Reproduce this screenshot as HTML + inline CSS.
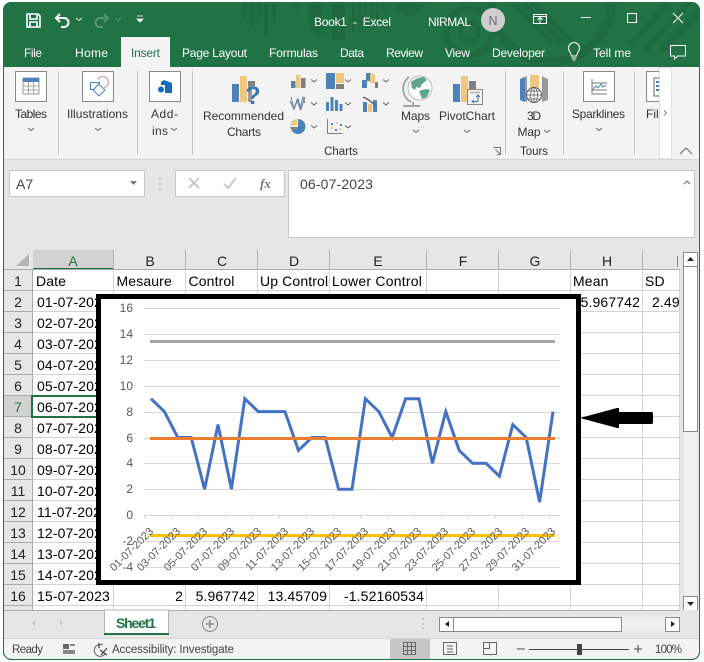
<!DOCTYPE html>
<html><head><meta charset="utf-8"><style>
html,body{margin:0;padding:0;background:#fff;width:704px;height:662px;overflow:hidden}
svg{display:block}
text{font-family:"Liberation Sans",sans-serif;white-space:pre}
.t{font-size:12px;fill:#fff}
.r{font-size:12px;fill:#333}
.c{font-size:14px;fill:#000;letter-spacing:.13px}
.h{font-size:14px;fill:#222;text-anchor:middle}
.a{font-size:12px;fill:#595959;text-anchor:end}
.d{font-size:11px;fill:#595959;text-anchor:end}
.m{text-anchor:middle}
</style></head><body>
<svg width="704" height="662" viewBox="0 0 704 662" xmlns="http://www.w3.org/2000/svg">
<defs><clipPath id="tb"><rect x="3" y="2" width="697" height="65"/></clipPath></defs>
<rect width="704" height="662" fill="#fff"/>
<!-- window -->
<rect x="3" y="2" width="697" height="658" rx="8" fill="#217346"/>
<rect x="4" y="60" width="695" height="599" rx="6" fill="#e6e6e6"/>
<rect x="3" y="37" width="697" height="30" fill="#217346"/>
<!-- title decoration -->
<g clip-path="url(#tb)" fill="#1f6a40">
<rect x="243" y="2" width="4" height="16"/><rect x="250" y="2" width="4" height="24"/><rect x="257" y="2" width="4" height="17"/><rect x="264" y="2" width="4" height="33"/><rect x="272" y="2" width="4" height="21"/>
<path d="M291 2h7v13zM309 2h13v34l-13-6zM332 2h13v38h-13z"/>
<rect x="352" y="2" width="3" height="30"/><rect x="358" y="2" width="3" height="30"/><rect x="364" y="2" width="3" height="26"/><rect x="370" y="2" width="3" height="22"/><rect x="376" y="2" width="3" height="18"/><rect x="382" y="2" width="3" height="12"/>
<circle cx="410" cy="2" r="14"/>
<circle cx="469" cy="32" r="23" fill="none" stroke="#1f6a40" stroke-width="7"/><circle cx="469" cy="32" r="9" fill="none" stroke="#1f6a40" stroke-width="5"/>
<circle cx="551" cy="2" r="60" fill="none" stroke="#1f6a40" stroke-width="9"/>
<path d="M512 2l40 40M522 2l40 40M532 2l40 40" stroke="#1f6a40" stroke-width="5" fill="none"/>
<path d="M630 45l40-43M645 50l45-48M660 52l40-40" stroke="#1f6a40" stroke-width="6" fill="none"/>
</g>
<!-- QAT -->
<path d="M27 14h11l2 2v11H27zM30 14v5h7v-5M30 27v-5h7v5" fill="none" stroke="#fff" stroke-width="1.6"/>
<path d="M60 14l-4 4 4 4M56 18h8a4.500 4.500 0 0 1 0 9h-3" fill="none" stroke="#fff" stroke-width="2"/>
<path d="M76 18l3 2.500 3-2.500" fill="none" stroke="#e8f0ea" stroke-width="1"/>
<path d="M115 18l3 2.500 3-2.500" fill="none" stroke="#57946f" stroke-width="1"/>
<path d="M104 14l4 4-4 4M108 18h-8a4.500 4.500 0 0 0 0 9h3" fill="none" stroke="#57946f" stroke-width="2"/>
<path d="M137 16h6M137 19h6l-3 3z" fill="#fff" stroke="#fff" stroke-width=".8"/>
<text class="t" x="314" y="26" textLength="77">Book1  -  Excel</text>
<text class="t" x="428" y="26" textLength="43">NIRMAL</text>
<circle cx="493" cy="20" r="12" fill="#d0cdcd"/>
<text x="493" y="25" class="m" style="font-size:12.500px;fill:#6d6a85">N</text>
<path d="M533.500 14.500h13v9h-13zM533.500 16.500h13M540 23v-5M537.500 20l2.500-2.500 2.500 2.500" fill="none" stroke="#fff"/>
<path d="M581 17.500h10" stroke="#fff"/>
<rect x="627.500" y="13.500" width="9" height="9" fill="none" stroke="#fff"/>
<path d="M673 13l10 10M683 13l-10 10" stroke="#fff"/>
<!-- tabs -->
<rect x="121" y="37" width="49" height="31" fill="#f3f3f3"/>
<text class="t" x="24" y="57" textLength="18">File</text>
<text class="t" x="75" y="57" textLength="33">Home</text>
<text class="t" x="131" y="57" style="fill:#217346" textLength="29">Insert</text>
<text class="t" x="182" y="57" textLength="65">Page Layout</text>
<text class="t" x="269" y="57" textLength="49">Formulas</text>
<text class="t" x="340" y="57" textLength="24">Data</text>
<text class="t" x="386" y="57" textLength="37">Review</text>
<text class="t" x="445" y="57" textLength="25">View</text>
<text class="t" x="492" y="57" textLength="53">Developer</text>
<path d="M571.500 56c0-3-3-4-3-8a5.500 5.500 0 0 1 11 0c0 4-3 5-3 8zM571.500 58h5M572.500 60h3" fill="none" stroke="#fff"/>
<text class="t" x="593" y="57" textLength="38">Tell me</text>
<path d="M670.500 45.500h15v10.500h-8l-3 3v-3h-4z" fill="none" stroke="#fff"/>
<!-- ribbon -->
<rect x="4" y="67" width="695" height="92" fill="#f3f3f3"/>
<rect x="4" y="159" width="695" height="1" fill="#d5d5d5"/>
<path d="M58.500 71v84M137.500 71v84M192.500 71v84M505.500 71v84M563.500 71v84M634.500 71v84" stroke="#c6c6c6"/>
<g fill="#fff" stroke="#8a8a8a"><rect x="15.500" y="71.500" width="31" height="30"/><rect x="82.500" y="71.500" width="31" height="30"/><rect x="149.500" y="71.500" width="31" height="30"/><rect x="583.500" y="71.500" width="31" height="30"/><rect x="646.500" y="71.500" width="20" height="30"/></g>
<!-- tables icon -->
<rect x="23" y="78" width="16" height="16" fill="#fff" stroke="#9a9a9a"/><rect x="23" y="78" width="16" height="4" fill="#4d82b8"/>
<path d="M23 86h16M23 90h16M28.500 82v12M33.500 82v12" stroke="#a8a8a8"/>
<!-- illustrations -->
<path d="M90.500 82.500h9v7h-9z" fill="none" stroke="#4d82b8"/><path d="M98 79.500a5.500 5.500 0 1 1 6 8" fill="none" stroke="#c88f83"/><path d="M99 84l6 6-6 6-6-6z" fill="#fff" stroke="#4d82b8"/>
<!-- addins -->
<path d="M164 80l8 3v9l-6 0v-7h-5v-3z" fill="#0f6cbd"/><path d="M165 85h7v8h-7z" fill="#0f6cbd"/><circle cx="161" cy="89.500" r="3" fill="#0f6cbd"/>
<!-- sparkline -->
<path d="M592 79v15h15M592 83h15M592 90h15" fill="none" stroke="#777"/><path d="M593 89l3-3 2 2 3-4 2 3 3-2" fill="none" stroke="#4d82b8"/>
<rect x="654" y="78" width="8" height="18" fill="#fff" stroke="#666"/><path d="M656 82h6M656 86h6M656 90h6" stroke="#4d82b8" stroke-width="2"/>
<!-- rec charts -->
<rect x="232" y="84" width="7" height="18" fill="#4d82b8"/><rect x="240" y="76" width="7" height="26" fill="#edc87e"/><rect x="248" y="81" width="7" height="5" fill="#7f7f7f"/><rect x="248" y="86" width="4" height="16" fill="#9a9a9a"/>
<text x="253" y="104" class="m" style="font-size:25px;font-weight:bold;fill:#3a78ad">?</text>
<!-- col 1 -->
<rect x="291" y="81" width="4.500" height="7" fill="#4d82b8"/><rect x="296" y="75" width="4.500" height="13" fill="#edc87e"/><rect x="301" y="78" width="4.500" height="10" fill="#7f7f7f"/>
<path d="M291 97l3 12 3-9 3 9 3-12 2 6" fill="none" stroke="#7f7f7f" stroke-width="1"/><path d="M290 101l4 8 4-10 3 10 4-12" fill="none" stroke="#4d82b8" stroke-width="1"/>
<path d="M298 119a7.500 7.500 0 1 1-6 12l6-4.500z" fill="#4d82b8"/><path d="M297 119a7.500 7.500 0 0 0-7 6.500h7z" fill="#edc87e"/><path d="M290 127h7l-5 4z" fill="#7f7f7f"/>
<!-- col 2 -->
<rect x="326" y="73" width="9" height="16" fill="#4d82b8"/><rect x="336" y="73" width="8" height="10" fill="#edc87e"/><rect x="336" y="84" width="8" height="5" fill="#7f7f7f"/>
<path d="M326 102h3v9h-3zM330.500 97h3v14h-3zM335 100h3v11h-3zM339.500 104h3v7h-3z" fill="#4d82b8"/>
<path d="M327.500 119v14.500h15" fill="none" stroke="#7f7f7f"/><path d="M331 127h2v2h-2zM336 122h2v2h-2zM339 128h2v2h-2z" fill="#edc87e"/><path d="M331 123h2v2h-2zM335 129h2v2h-2zM340 124h2v2h-2z" fill="#4d82b8"/>
<!-- col 3 -->
<rect x="362" y="80" width="5" height="8" fill="#4d82b8"/><rect x="366" y="73" width="5" height="8" fill="#4d82b8"/><rect x="370" y="74" width="5" height="9" fill="#edc87e"/><rect x="375" y="82" width="3" height="6" fill="#7f7f7f"/>
<rect x="363" y="102" width="4" height="10" fill="#4d82b8"/><rect x="368" y="104" width="4" height="8" fill="#edc87e"/><rect x="373" y="100" width="4" height="12" fill="#4d82b8"/><path d="M363 97l6 3 6 5" fill="none" stroke="#666" stroke-width="1.500"/>
<path d="M311 79.500l3 2.500 3-2.500M311 102.500l3 2.500 3-2.500M311 125.500l3 2.500 3-2.500M345 79.500l3 2.500 3-2.500M345 102.500l3 2.500 3-2.500M345 125.500l3 2.500 3-2.500M383 79.500l3 2.500 3-2.500M383 102.500l3 2.500 3-2.500M28 128l3 2.500 3-2.500M95 128l3 2.500 3-2.500M171 128l3 2.500 3-2.500M413 130l3 2.500 3-2.500M464 130l3 2.500 3-2.500M544 130l3 2.500 3-2.500M596 128l3 2.500 3-2.500" fill="none" stroke="#666"/>
<!-- globe -->
<path d="M409 77a15 15 0 0 0 2 25M403 106h17M413 102v4" fill="none" stroke="#a5a5a5" stroke-width="2"/>
<circle cx="420" cy="88" r="12" fill="#fff" stroke="#bbb"/><path d="M411 82c4-3 8-5 13-5l3 3-5 4-2 4-4-1-1 3-3-2zM419 91l7-2 4 1-3 7-5 2z" fill="#5fa58d"/>
<!-- pivot -->
<rect x="453" y="84" width="7" height="18" fill="#4d82b8"/><rect x="461" y="76" width="7" height="26" fill="#edc87e"/><rect x="469" y="81" width="7" height="8" fill="#7f7f7f"/>
<rect x="467.500" y="89.500" width="15" height="15" fill="#f3f3f3" stroke="#888"/><path d="M470 92.500h10" stroke="#c2c2c2" stroke-width="2"/><path d="M473 101.500h5v-6M476 97l2-2 2 2M474 100l-2 1.500 2 1.500" fill="none" stroke="#3a78ad"/>
<!-- 3d map -->
<path d="M520 79l7-3v26l-7-2zM542 76l6 3v21l-6 2z" fill="#9a9a9a"/><path d="M520 79l5-2v25l-5-2z" fill="#4d82b8"/><rect x="530" y="75" width="9" height="16" fill="#edc87e"/>
<circle cx="534" cy="95" r="7.500" fill="#fff" stroke="#555"/><path d="M526.500 95h15M534 87.500v15M528 91h12M528 99h12" stroke="#555" stroke-width=".7"/><ellipse cx="534" cy="95" rx="3.500" ry="7.500" fill="none" stroke="#555" stroke-width=".7"/>
<path d="M493.500 147.500h7v7M495.500 149.500l5 5M497 154.500h3.500v-3.500" fill="none" stroke="#777"/>
<!-- ribbon labels -->
<g class="r">
<text class="r m" x="31" y="118" textLength="32">Tables</text>
<text class="r m" x="97.500" y="118" textLength="61">Illustrations</text>
<text class="r m" x="164.500" y="118" textLength="27">Add-</text>
<text class="r m" x="160" y="135" textLength="16">ins</text>
<text class="r m" x="243.500" y="120" textLength="81">Recommended</text>
<text class="r m" x="244" y="136" textLength="34">Charts</text>
<text class="r m" x="415.500" y="120" textLength="29">Maps</text>
<text class="r m" x="467" y="120" textLength="56">PivotChart</text>
<text class="r m" x="534" y="120" textLength="14">3D</text>
<text class="r m" x="529" y="136" textLength="23">Map</text>
<text class="r m" x="598.500" y="118" textLength="53">Sparklines</text>
<text class="r" x="646" y="118">Filt</text>
<text class="r m" x="341" y="155" style="font-size:11.500px">Charts</text>
<text class="r m" x="534" y="155" style="font-size:11.500px">Tours</text>
</g>
<rect x="659.500" y="67.500" width="12" height="91" fill="#fff" stroke="#e2e2e2"/>
<rect x="672" y="68" width="27" height="90" fill="#f3f3f3"/>
<path d="M664 110.500l2.500 2.500-2.500 2.500" fill="none" stroke="#888"/>
<path d="M680 154l6-6 6 6" fill="none" stroke="#666"/>
<!-- formula bar -->
<rect x="9.500" y="170.500" width="135" height="26" fill="#fff" stroke="#c6c6c6"/>
<text x="16" y="189" style="font-size:14px;fill:#444">A7</text>
<path d="M130 181h7l-3.500 4z" fill="#777"/>
<path d="M160 178v2M160 183v2M160 188v2" stroke="#b5b5b5" stroke-width="1.500"/>
<rect x="175.500" y="170.500" width="109" height="26" fill="#fff" stroke="#c6c6c6"/>
<path d="M189 178l10 10M199 178l-10 10" stroke="#c4c4c4" stroke-width="1.800"/>
<path d="M224 184l4 4 8-10" fill="none" stroke="#c4c4c4" stroke-width="1.800"/>
<text x="260" y="188" style="font-family:'Liberation Serif',serif;font-style:italic;font-weight:bold;font-size:13px;fill:#777">fx</text>
<rect x="288.500" y="170.500" width="406" height="67" fill="#fff" stroke="#c6c6c6"/>
<text x="300" y="189" style="font-size:14px;fill:#444;letter-spacing:.15px">06-07-2023</text>
<path d="M684 184l3-3 3 3" fill="none" stroke="#888" stroke-width="1.500"/>
<!-- sheet -->
<rect x="33" y="270" width="647" height="340" fill="#fff"/>
<rect x="4" y="250" width="676" height="20" fill="#e6e6e6"/>
<rect x="33" y="250" width="81" height="19" fill="#d2d2d2"/>
<rect x="33" y="268" width="81" height="2" fill="#217346"/>
<path d="M29 254v12H16z" fill="#b4b4b4"/>
<path d="M113.500 250v19M185.500 250v19M257.500 250v19M329.500 250v19M426.500 250v19M498.500 250v19M570.500 250v19M642.500 250v19" stroke="#b4b4b4"/>
<path d="M4 269.500h676" stroke="#ababab"/>
<path d="M113.500 270v340M185.500 270v340M257.500 270v340M329.500 270v340M426.500 270v340M498.500 270v340M570.500 270v340M642.500 270v340M679.500 270v340" stroke="#d4d4d4"/>
<path d="M33 290.500h647M33 311.500h647M33 332.500h647M33 353.500h647M33 374.500h647M33 395.500h647M33 416.500h647M33 437.500h647M33 458.500h647M33 479.500h647M33 500.500h647M33 521.500h647M33 542.500h647M33 563.500h647M33 584.500h647M33 605.500h647" stroke="#d4d4d4"/>
<rect x="4" y="270" width="28" height="340" fill="#e6e6e6"/>
<rect x="4" y="396" width="28" height="21" fill="#d2d2d2"/>
<path d="M32.500 270v340" stroke="#ababab"/>
<path d="M4 290.500h28M4 311.500h28M4 332.500h28M4 353.500h28M4 374.500h28M4 395.500h28M4 416.500h28M4 437.500h28M4 458.500h28M4 479.500h28M4 500.500h28M4 521.500h28M4 542.500h28M4 563.500h28M4 584.500h28M4 605.500h28" stroke="#ababab"/>
<rect x="31" y="395" width="2" height="23" fill="#217346"/>
<rect x="32" y="395" width="70" height="2" fill="#217346"/><rect x="32" y="416" width="70" height="2" fill="#217346"/>
<text class="h" x="73" y="266" style="fill:#217346">A</text><text class="h" x="150" y="266">B</text><text class="h" x="222" y="266">C</text><text class="h" x="294" y="266">D</text><text class="h" x="378" y="266">E</text><text class="h" x="463" y="266">F</text><text class="h" x="535" y="266">G</text><text class="h" x="607" y="266">H</text>
<rect x="677" y="256" width="1" height="11" fill="#c07a2a"/>
<g>
<text class="h" x="18" y="286">1</text><text class="h" x="18" y="307">2</text><text class="h" x="18" y="328">3</text><text class="h" x="18" y="349">4</text><text class="h" x="18" y="370">5</text><text class="h" x="18" y="391">6</text><text class="h" x="18" y="412" style="fill:#217346">7</text><text class="h" x="18" y="433">8</text><text class="h" x="18" y="454">9</text><text class="h" x="18" y="475">10</text><text class="h" x="18" y="496">11</text><text class="h" x="18" y="517">12</text><text class="h" x="18" y="538">13</text><text class="h" x="18" y="559">14</text><text class="h" x="18" y="580">15</text><text class="h" x="18" y="601">16</text>
</g>
<g>
<text class="c" x="36" y="286">Date</text><text class="c" x="116.500" y="286">Mesaure</text><text class="c" x="188.500" y="286">Control</text><text class="c" x="260" y="286">Up Control</text><text class="c" x="332" y="286" textLength="90">Lower Control</text><text class="c" x="573" y="286">Mean</text><text class="c" x="645" y="286">SD</text>
<text class="c" x="37" y="307">01-07-2023</text><text class="c" x="37" y="328">02-07-2023</text><text class="c" x="37" y="349">03-07-2023</text><text class="c" x="37" y="370">04-07-2023</text><text class="c" x="37" y="391">05-07-2023</text><text class="c" x="37" y="412">06-07-2023</text><text class="c" x="37" y="433">07-07-2023</text><text class="c" x="37" y="454">08-07-2023</text><text class="c" x="37" y="475">09-07-2023</text><text class="c" x="37" y="496">10-07-2023</text><text class="c" x="37" y="517">11-07-2023</text><text class="c" x="37" y="538">12-07-2023</text><text class="c" x="37" y="559">13-07-2023</text><text class="c" x="37" y="580">14-07-2023</text><text class="c" x="37" y="601">15-07-2023</text>
<text class="c" x="640" y="307" text-anchor="end">5.967742</text>
<text class="c" x="652" y="307">2.49</text>
<text class="c" x="183" y="601" text-anchor="end">2</text><text class="c" x="255" y="601" text-anchor="end">5.967742</text><text class="c" x="327" y="601" text-anchor="end">13.45709</text><text class="c" x="424" y="601" text-anchor="end">-1.52160534</text>
</g>
<rect x="680" y="300" width="3" height="12" fill="#e6e6e6"/>
<!-- chart -->
<rect x="98.500" y="296.500" width="480" height="286" fill="#fff" stroke="#000" stroke-width="5"/>
<path d="M144 308.500h416M144 334.500h416M144 360.500h416M144 386.500h416M144 412.500h416M144 438.500h416M144 463.500h416M144 489.500h416M144 515.500h416M144 541.500h416M144 567.500h416" stroke="#d9d9d9"/>
<path d="M144.500 515v4M171.500 515v4M198.500 515v4M225.500 515v4M252.500 515v4M279.500 515v4M306.500 515v4M333.500 515v4M360.500 515v4M387.500 515v4M414.500 515v4M441.500 515v4M468.500 515v4M495.500 515v4M522.500 515v4M549.500 515v4" stroke="#d9d9d9"/>
<g>
<text class="a" x="133" y="312">16</text><text class="a" x="133" y="338">14</text><text class="a" x="133" y="364">12</text><text class="a" x="133" y="390">10</text><text class="a" x="133" y="416">8</text><text class="a" x="133" y="442">6</text><text class="a" x="133" y="467">4</text><text class="a" x="133" y="493">2</text><text class="a" x="133" y="519">0</text><text class="a" x="133" y="545">-2</text><text class="a" x="133" y="571">-4</text>
</g>
<path d="M150 341.500h405" stroke="#a5a5a5" stroke-width="3"/>
<polyline fill="none" stroke="#4472c4" stroke-width="3" stroke-linejoin="miter" points="151,398.700 164.400,411.600 177.800,437.500 191.200,437.500 204.600,489.200 218,424.600 231.400,489.200 244.800,398.700 258.200,411.600 271.600,411.600 285,411.600 298.400,450.400 311.800,437.500 325.200,437.500 338.600,489.200 352,489.200 365.400,398.700 378.800,411.600 392.200,437.500 405.600,398.700 419,398.700 432.400,463.300 445.800,411.600 459.200,450.400 472.600,463.300 486,463.300 499.400,476.200 512.800,424.600 526.200,437.500 539.600,502.100 553,411.600"/>
<path d="M150 438.500h405" stroke="#ed7d31" stroke-width="3"/>
<path d="M150 535.500h405" stroke="#ffc000" stroke-width="3"/>
<g>
<text class="d" transform="translate(154 532) rotate(-45)">01-07-2023</text>
<text class="d" transform="translate(181 532) rotate(-45)">03-07-2023</text>
<text class="d" transform="translate(208 532) rotate(-45)">05-07-2023</text>
<text class="d" transform="translate(235 532) rotate(-45)">07-07-2023</text>
<text class="d" transform="translate(262 532) rotate(-45)">09-07-2023</text>
<text class="d" transform="translate(289 532) rotate(-45)">11-07-2023</text>
<text class="d" transform="translate(315 532) rotate(-45)">13-07-2023</text>
<text class="d" transform="translate(342 532) rotate(-45)">15-07-2023</text>
<text class="d" transform="translate(369 532) rotate(-45)">17-07-2023</text>
<text class="d" transform="translate(396 532) rotate(-45)">19-07-2023</text>
<text class="d" transform="translate(422 532) rotate(-45)">21-07-2023</text>
<text class="d" transform="translate(449 532) rotate(-45)">23-07-2023</text>
<text class="d" transform="translate(476 532) rotate(-45)">25-07-2023</text>
<text class="d" transform="translate(503 532) rotate(-45)">27-07-2023</text>
<text class="d" transform="translate(530 532) rotate(-45)">29-07-2023</text>
<text class="d" transform="translate(556 532) rotate(-45)">31-07-2023</text>
</g>
<!-- arrow -->
<path d="M580 418l37-10h2v4h33l1 1v10l-1 1h-33v4h-2z" fill="#000"/>
<!-- vertical scrollbar -->
<rect x="683" y="250" width="16" height="360" fill="#e6e6e6"/>
<rect x="684" y="266" width="13" height="330" fill="#f0f0f0"/>
<rect x="683.500" y="252.500" width="14" height="14" fill="#fff" stroke="#8a8a8a"/>
<path d="M687 261l3.500-4 3.500 4z" fill="#222"/>
<rect x="683.500" y="266.500" width="14" height="165" fill="#fff" stroke="#8a8a8a"/>
<rect x="683.500" y="596.500" width="14" height="14" fill="#fff" stroke="#8a8a8a"/>
<path d="M687 602l3.500 4 3.500-4z" fill="#222"/>
<!-- sheet tabs -->
<rect x="4" y="610" width="695" height="28" fill="#e6e6e6"/>
<path d="M4 610.500h676" stroke="#ababab"/>
<path d="M35 620v6l-3-3zM60 620v6l3-3z" fill="#c4c4c4"/>
<rect x="104.500" y="610" width="64" height="24" fill="#fff" stroke="#b4b4b4"/>
<rect x="104" y="633" width="65" height="2" fill="#217346"/>
<text x="136" y="628" class="m" style="font-size:14px;font-weight:bold;fill:#217346" textLength="40">Sheet1</text>
<circle cx="210" cy="624" r="7.500" fill="none" stroke="#888"/>
<path d="M206 624h8M210 620v8" stroke="#888" stroke-width="1.500"/>
<path d="M423 618v2M423 623v2M423 627v2" stroke="#b5b5b5" stroke-width="1.500"/>
<rect x="439" y="617" width="241" height="14" fill="#f0f0f0"/>
<rect x="439.500" y="617.500" width="14" height="14" fill="#fff" stroke="#8a8a8a"/>
<path d="M449 621v6l-4-3z" fill="#222"/>
<rect x="453.500" y="617.500" width="168" height="14" fill="#fff" stroke="#8a8a8a"/>
<rect x="665.500" y="617.500" width="14" height="14" fill="#fff" stroke="#8a8a8a"/>
<path d="M671 621v6l4-3z" fill="#222"/>
<!-- status bar -->
<rect x="4" y="638" width="695" height="21" fill="#f3f3f3"/>
<path d="M4 638.500h695" stroke="#d5d5d5"/>
<text x="12" y="653" style="font-size:11.500px;fill:#444" textLength="31">Ready</text>
<path d="M63 644h6v5h-6z" fill="#666"/><path d="M70 644h5v2h-5zM63 650h12v4H63z" fill="#888"/>
<path d="M103 645a6 6 0 1 0 2 9" fill="none" stroke="#666"/><path d="M99 643v5M100 650l7 5M107 648l-6 7" stroke="#444" stroke-width="1.300"/>
<text x="112" y="653" style="font-size:11.500px;fill:#444" textLength="122">Accessibility: Investigate</text>
<rect x="390" y="639" width="40" height="21" fill="#c6c6c6"/>
<path d="M403.500 642.500h12v12h-12zM407.500 642.500v12M411.500 642.500v12M403.500 646.500h12M403.500 650.500h12" fill="none" stroke="#666"/>
<rect x="443.500" y="642.500" width="13" height="12" fill="none" stroke="#666"/><path d="M447 646h6M447 649h6M447 652h6" stroke="#666"/>
<path d="M483.500 642.500h13v12h-13zM489.500 642.500v6h-6" fill="none" stroke="#666"/>
<path d="M517 649h8" stroke="#444"/>
<path d="M529 649.500h100" stroke="#444"/>
<rect x="577" y="644" width="5" height="11" fill="#444"/>
<path d="M634 649h8M638 645v8" stroke="#444"/>
<text x="655" y="653" style="font-size:11.500px;fill:#444" textLength="27">100%</text>
<!-- window frame -->
<rect x="3.500" y="2.500" width="696" height="657" rx="8" fill="none" stroke="#217346"/>
</svg>
</body></html>
